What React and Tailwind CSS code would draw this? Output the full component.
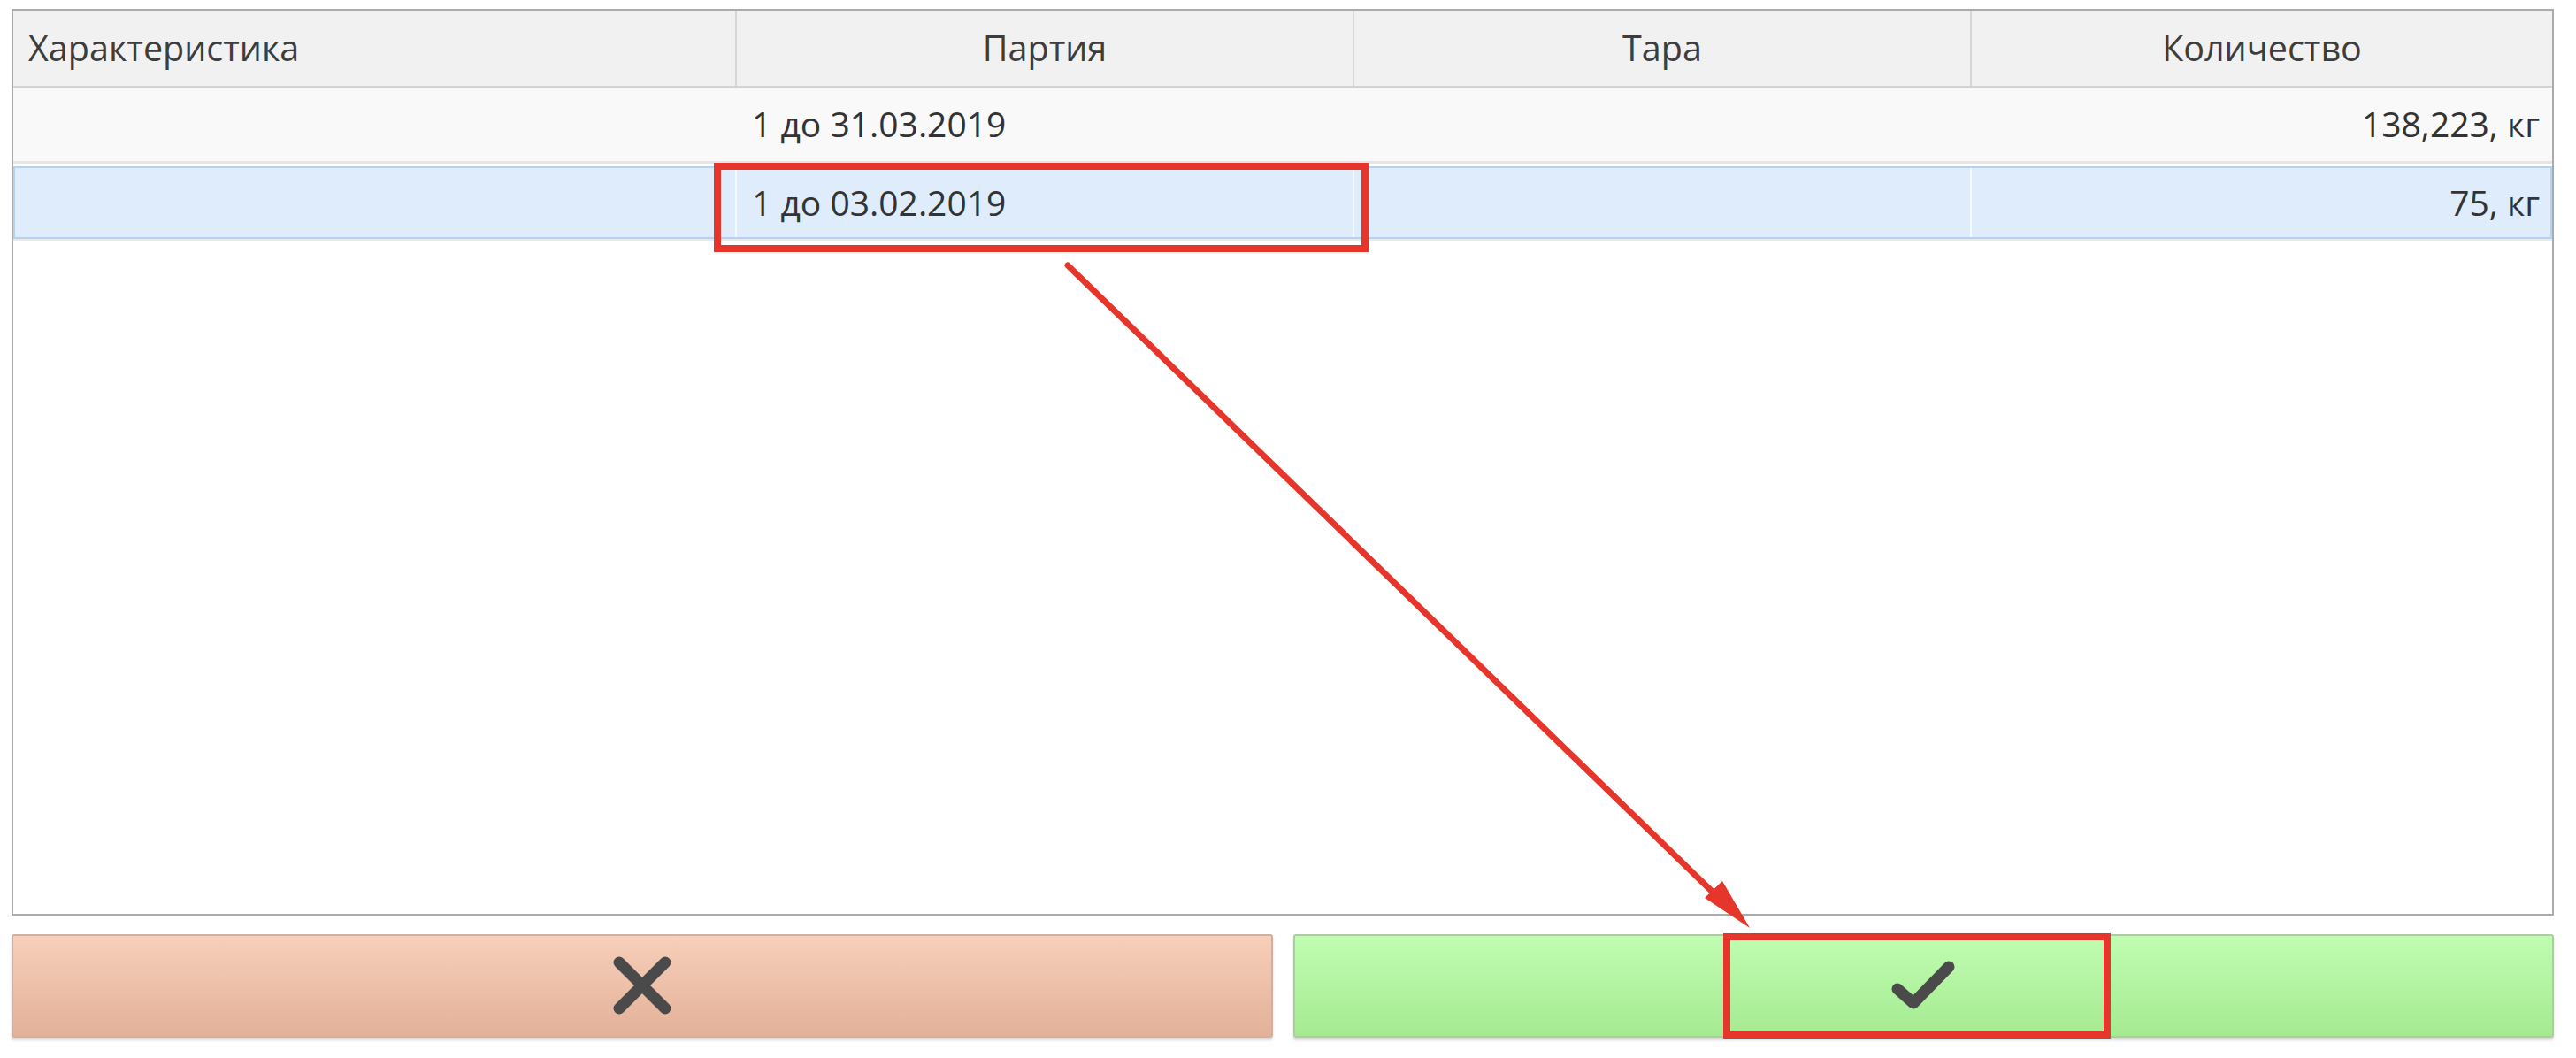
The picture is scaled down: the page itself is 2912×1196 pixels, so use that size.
import React from 'react';

const columns = [
  { title: 'Характеристика', align: 'text-left' },
  { title: 'Партия', align: 'text-center' },
  { title: 'Тара', align: 'text-center' },
  { title: 'Количество', align: 'text-center' },
];

const rows = [
  { party: '1 до 31.03.2019', amount: '138,223, кг', selected: false },
  { party: '1 до 03.02.2019', amount: '75, кг', selected: true },
];

function HeaderRow() {
  return (
    <div className="grid grid-cols-[816px_698px_698px_1fr] h-[87px] bg-[#f1f1f1] border-b-2 border-[#d3d3d3]">
      {columns.map((col, i) => (
        <div
          key={col.title}
          className={`flex items-center px-[17px] text-[39.5px] text-[#3d3d3d] ${col.align} ${
            i > 0 ? 'border-l-2 border-[#d6d6d6] justify-center' : ''
          }`}
        >
          <span className="block w-full">{col.title}</span>
        </div>
      ))}
    </div>
  );
}

function DataRow({ row }) {
  if (row.selected) {
    return (
      <div className="grid grid-cols-[814px_698px_698px_1fr] h-[82px] mt-[3px] bg-[#deecfb] border-2 border-[#b3d3f3] text-[39px] text-[#333]">
        <div />
        <div className="flex items-center pl-[17px] border-l-2 border-[#f4f9ff]">{row.party}</div>
        <div className="border-l-2 border-[#f4f9ff]" />
        <div className="flex items-center justify-end pr-[12px] border-l-2 border-[#f4f9ff]">{row.amount}</div>
      </div>
    );
  }
  return (
    <div className="grid grid-cols-[816px_698px_698px_1fr] h-[86px] bg-[#f9f9f9] border-b-[3px] border-[#e6e6e6] text-[39px] text-[#333]">
      <div />
      <div className="flex items-center pl-[19px]">{row.party}</div>
      <div />
      <div className="flex items-center justify-end pr-[14px]">{row.amount}</div>
    </div>
  );
}

export default function App() {
  return (
    <div className="relative w-[2912px] h-[1196px] bg-white pl-[13px] pr-[25px] pt-[10px] font-['Open_Sans',sans-serif]">
      {/* таблица партий */}
      <div className="flex flex-col h-[1025px] border-2 border-[#ababab] bg-white">
        <HeaderRow />
        {rows.map((r) => (
          <DataRow key={r.party} row={r} />
        ))}
        <div className="h-[2px] bg-[#e9e9e9]" />
      </div>

      {/* кнопки */}
      <div className="flex gap-[23px] mt-[21px] h-[117px]">
        <button className="flex-1 flex items-center justify-center rounded-[3px] border-2 border-[#cdb1a3] bg-gradient-to-b from-[#f7cfba] to-[#e3b199] shadow-[0_3px_3px_rgba(0,0,0,0.15)]">
          <svg width="70" height="70" viewBox="0 0 70 70">
            <path d="M9 8 L61 60 M61 8 L9 60" stroke="#4a4a4a" strokeWidth="13" strokeLinecap="round" fill="none" />
          </svg>
        </button>
        <button className="flex-1 flex items-center justify-center rounded-[3px] border-2 border-[#b3c8ab] bg-gradient-to-b from-[#c0fdb1] to-[#a5ea91] shadow-[0_3px_3px_rgba(0,0,0,0.15)]">
          <svg width="76" height="60" viewBox="0 0 76 60">
            <path d="M9 33 L27 49 L67 8" stroke="#4a4a4a" strokeWidth="13" strokeLinecap="round" strokeLinejoin="round" fill="none" />
          </svg>
        </button>
      </div>

      {/* пометки поверх */}
      <svg className="absolute inset-0 pointer-events-none" width="2912" height="1196" viewBox="0 0 2912 1196">
        <rect x="811" y="188" width="732" height="93" fill="none" stroke="#e6352a" strokeWidth="8" />
        <rect x="1952" y="1059" width="430" height="111" fill="none" stroke="#e6352a" strokeWidth="8" />
        <line x1="1207" y1="300" x2="1950" y2="1022" stroke="#e6352a" strokeWidth="7" strokeLinecap="round" />
        <polygon points="1978,1049 1927,1015 1947,996" fill="#e6352a" />
      </svg>
    </div>
  );
}
